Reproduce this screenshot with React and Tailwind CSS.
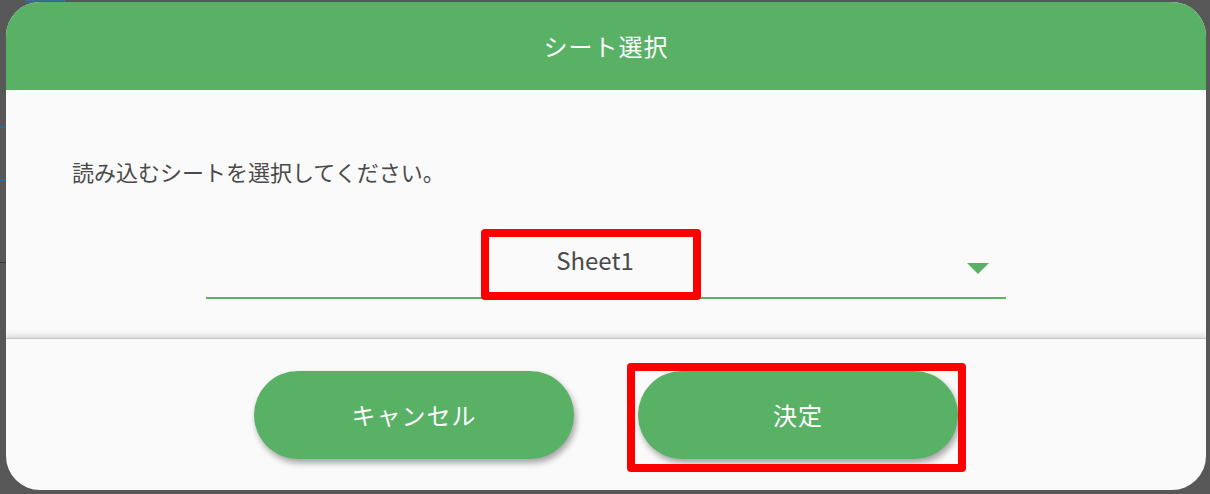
import { useState } from 'react'

const font = { fontFamily: '"Noto Sans CJK JP", "Noto Sans", sans-serif' }

function Highlight({ className }) {
  return <div className={`pointer-events-none absolute rounded-[4px] border-[8px] border-[#ff0000] ${className}`} />
}

export default function App() {
  const [sheet] = useState('Sheet1')

  return (
    <div className="relative h-[494px] w-[1210px] overflow-hidden bg-[#575757]" style={font}>
      {/* bits of the page behind the dialog */}
      <div className="absolute left-[25px] top-0 h-[3px] w-[40px] border border-[#3a6f9a]" />
      <div className="absolute left-0 top-[126px] h-[2px] w-[8px] bg-[#2f6a96]" />
      <div className="absolute left-0 top-[179px] h-[2px] w-[8px] bg-[#2f6a96]" />
      <div className="absolute left-0 top-[262px] h-[1px] w-[8px] bg-[#333]" />

      <div className="absolute left-[6px] top-[2px] flex h-[488px] w-[1200px] flex-col overflow-hidden rounded-[34px] bg-[#fafafa]">
        <div className="flex h-[88px] shrink-0 items-center justify-center bg-[#59b166] text-[24px] tracking-[1px] text-white">
          シート選択
        </div>

        <div className="flex flex-1 flex-col">
          <p className="pl-[66px] pt-[66px] text-[22px] leading-[30px] text-[#4a4a4a]">
            読み込むシートを選択してください。
          </p>
          <div className="relative mx-auto mt-[57px] flex h-[56px] w-[800px] items-start justify-center border-b-2 border-[#59b166] pr-[22px]">
            <span className="pt-[2px] text-[24px] leading-[30px] text-[#4a4a4a]">{sheet}</span>
            <svg className="absolute right-[17px] top-[20px]" width="22" height="12" viewBox="0 0 22 12">
              <path d="M0 0H22L11 11Z" fill="#59b166" />
            </svg>
            <Highlight className="left-[275px] top-[-14px] h-[71px] w-[220px]" />
          </div>
        </div>

        <div className="flex h-[152px] shrink-0 items-center justify-center gap-[64px] border-t border-[#c4c4c4] shadow-[0_-3px_5px_rgba(0,0,0,0.12)]">
          <button
            type="button"
            className="h-[88px] w-[320px] rounded-full bg-[#59b166] text-[24px] tracking-[1px] text-white shadow-[2px_4px_6px_rgba(0,0,0,0.35)]"
          >
            キャンセル
          </button>
          <div className="relative">
            <button
              type="button"
              className="h-[88px] w-[320px] rounded-full bg-[#59b166] text-[24px] tracking-[1px] text-white shadow-[2px_4px_6px_rgba(0,0,0,0.35)]"
            >
              決定
            </button>
            <Highlight className="left-[-11px] top-[-8px] h-[109px] w-[339px]" />
          </div>
        </div>
      </div>
    </div>
  )
}
